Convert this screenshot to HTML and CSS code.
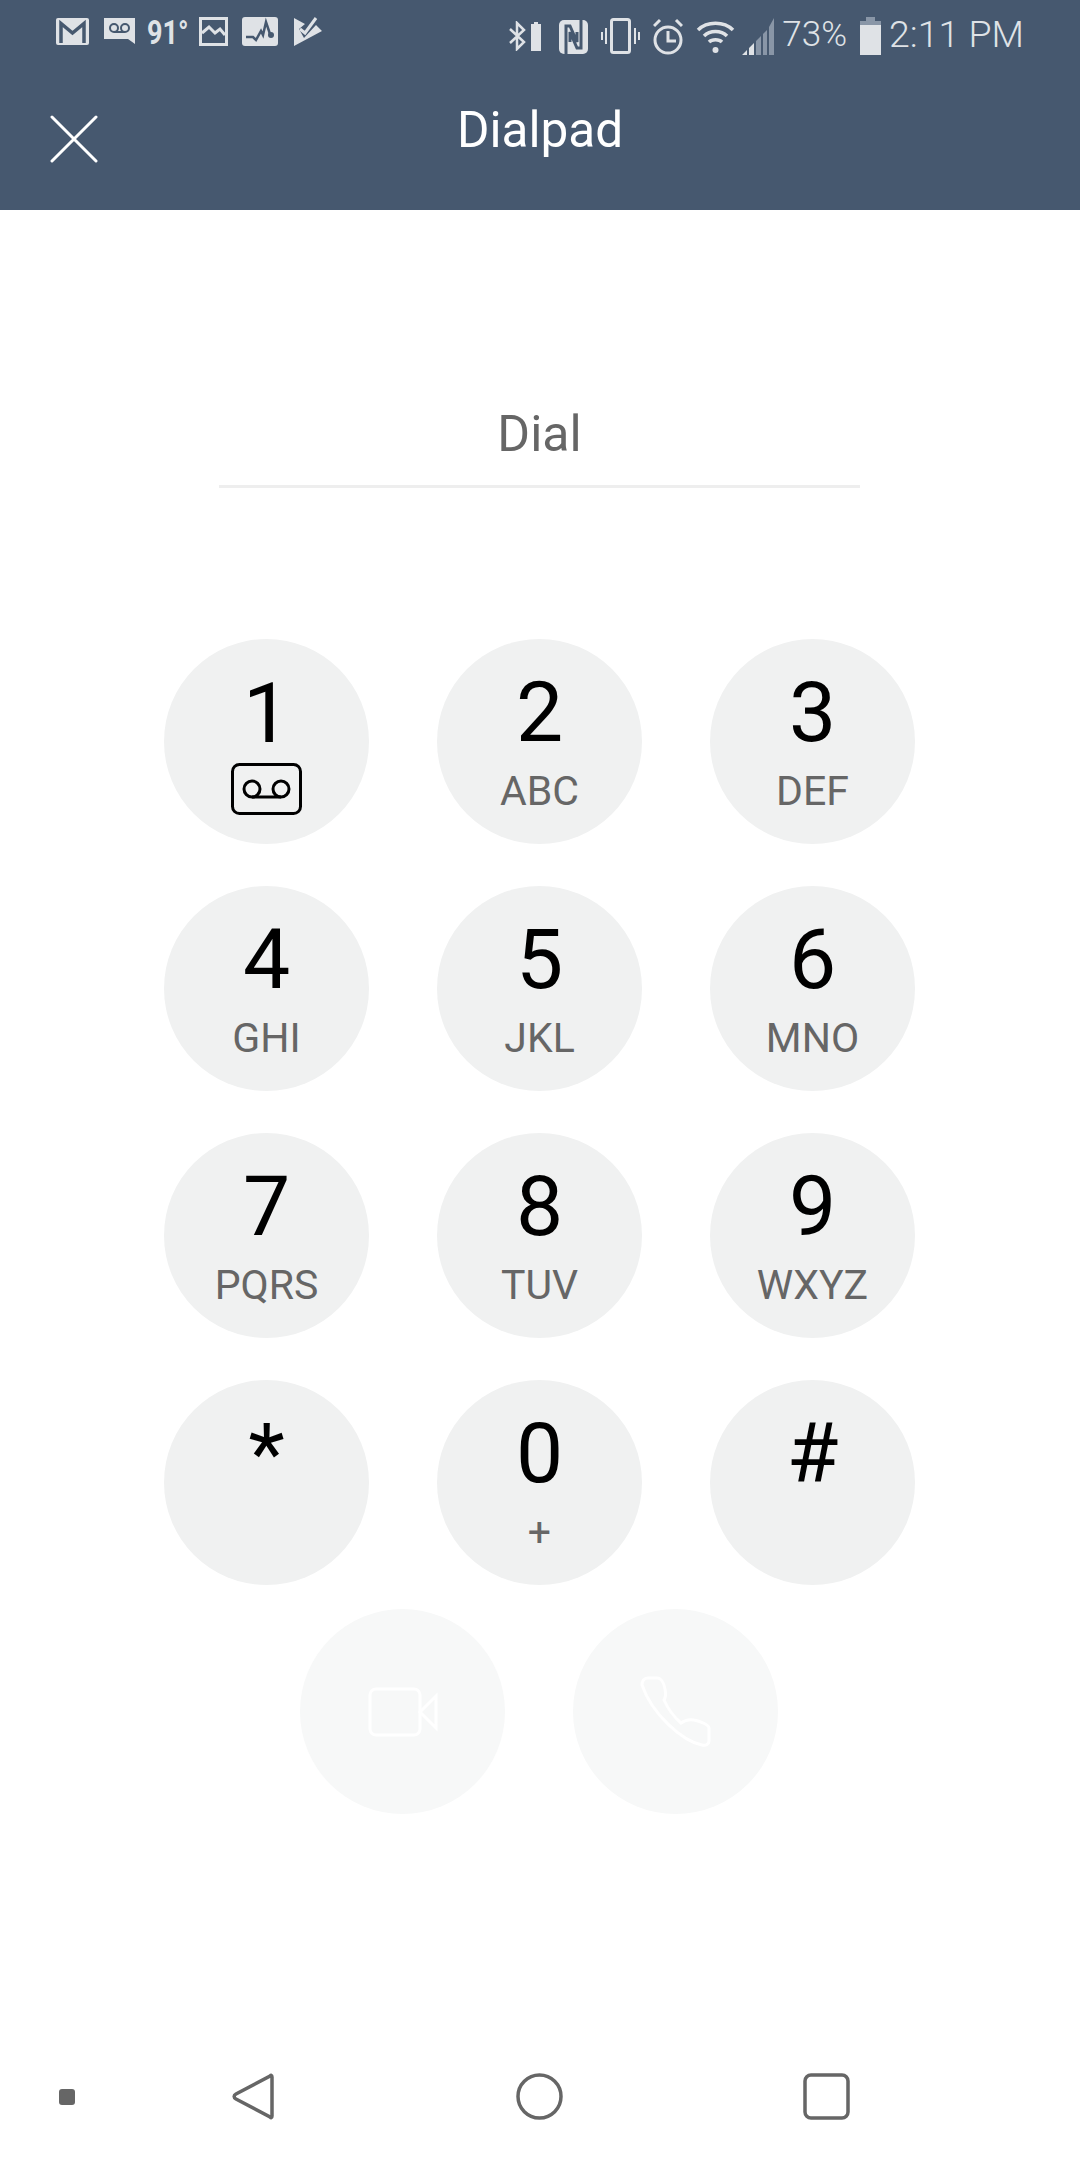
FILE: index.html
```html
<!DOCTYPE html>
<html lang="en">
<head>
<meta charset="utf-8">
<title>Dialpad</title>
<link rel="stylesheet" href="styles.css">
</head>
<body>
<div class="screen">
  <header class="header">
    <div class="status">
      <div class="status-left">
        <svg class="s-mail" width="33" height="27" viewBox="0 0 33 27"><rect width="33" height="27" rx="2" fill="#dfe2e6"/><path d="M5 25V5.500L16.500 15 28 5.500V25" fill="none" stroke="#46586f" stroke-width="3.500"/></svg>
        <svg class="s-vm" width="31" height="26" viewBox="0 0 31 26"><path d="M0 0H31V26L24 21H0Z" fill="#dfe2e6"/><g fill="none" stroke="#46586f" stroke-width="2"><circle cx="10" cy="10" r="4"/><circle cx="21" cy="10" r="4"/><path d="M10 14H21"/></g></svg>
        <span class="s-temp">91°</span>
        <svg class="s-img" width="29" height="29" viewBox="0 0 29 29"><rect x="1.500" y="1.500" width="26" height="26" fill="none" stroke="#dfe2e6" stroke-width="3"/><path d="M3 16L10 10 16 16 21 12 26 18" fill="none" stroke="#dfe2e6" stroke-width="3"/></svg>
        <svg class="s-act" width="36" height="29" viewBox="0 0 36 29"><rect width="36" height="29" rx="3" fill="#dfe2e6"/><path d="M4 20H11L14 23 19 14 21 18 24 5 28 17" fill="none" stroke="#46586f" stroke-width="2.500"/><circle cx="29" cy="18" r="3" fill="#46586f"/></svg>
        <svg class="s-chk" width="28" height="29" viewBox="0 0 28 29"><path d="M0 1L11 7 5 12 10 21 22 8 28 14 0 29Z" fill="#dfe2e6"/><path d="M6 12L11 16 22 1" fill="none" stroke="#dfe2e6" stroke-width="3"/></svg>
      </div>
      <div class="status-right">
        <svg class="s-bt" width="19" height="30" viewBox="0 0 19 30"><path d="M2 8L16 21 9 28V2L16 9 2 22" fill="none" stroke="#dfe2e6" stroke-width="2.500"/></svg>
        <svg class="s-minibat" width="10" height="29" viewBox="0 0 10 29"><path d="M3 0H7V2H10V29H0V2H3Z" fill="#dfe2e6"/></svg>
        <svg class="s-nfc" width="29" height="34" viewBox="0 0 29 34"><rect width="29" height="34" rx="5" fill="#dfe2e6"/><path d="M7 34V6H11L18 22V12M22 0V28H18L11 12V22" fill="none" stroke="#46586f" stroke-width="3"/></svg>
        <svg class="s-vib" width="39" height="36" viewBox="0 0 39 36"><rect x="10.500" y="1.500" width="18" height="33" rx="2" fill="none" stroke="#dfe2e6" stroke-width="3"/><path d="M5 10V26M1 14V22M34 10V26M38 14V22" stroke="#dfe2e6" stroke-width="2"/></svg>
        <svg class="s-alarm" width="30" height="37" viewBox="0 0 30 37"><circle cx="15" cy="22" r="13" fill="none" stroke="#dfe2e6" stroke-width="3"/><path d="M15 13V23H23M1 8L7 2M29 8L23 2" fill="none" stroke="#dfe2e6" stroke-width="3"/></svg>
        <svg class="s-wifi" width="39" height="36" viewBox="0 0 39 36"><path d="M2 12C11 3 28 3 37 12M8 18C14 12 25 12 31 18M13 24C16 21 23 21 26 24" fill="none" stroke="#dfe2e6" stroke-width="3.500"/><circle cx="19.500" cy="32" r="3" fill="#dfe2e6"/></svg>
        <svg class="s-sig" width="32" height="37" viewBox="0 0 32 37"><path d="M0 37L5 32V37ZM7 37V30L12 25V37Z" fill="#dfe2e6"/><path d="M14 37V23L19 18V37ZM21 37V16L25 12V37ZM27 37V9L32 0V37Z" fill="#8996a7"/></svg>
        <span class="s-pct">73%</span>
        <svg class="s-bat" width="21" height="38" viewBox="0 0 21 38"><path d="M6 0H15V4H21V38H0V4H6Z" fill="#dfe2e6"/><path d="M6 0H15V4H21V8H0V4H6Z" fill="#8996a7"/></svg>
        <span class="s-time">2:11 PM</span>
      </div>
    </div>
    <div class="appbar">
      <svg class="close" width="48" height="48" viewBox="0 0 48 48"><path d="M2 2L46 46M46 2L2 46" stroke="#fff" stroke-width="3" stroke-linecap="round"/></svg>
      <h1 class="title">Dialpad</h1>
    </div>
  </header>

  <main class="main">
    <div class="dial-field">Dial</div>
    <div class="keypad">
      <div class="key key-vm"><span class="digit">1</span>
        <svg class="vm" width="71" height="52" viewBox="0 0 71 52"><rect x="1.500" y="1.500" width="68" height="49" rx="7" fill="none" stroke="#000" stroke-width="3"/><g fill="none" stroke="#000" stroke-width="3"><circle cx="21" cy="26" r="8"/><circle cx="50" cy="26" r="8"/><path d="M21 34H50"/></g></svg>
      </div>
      <div class="key"><span class="digit">2</span><span class="letters">ABC</span></div>
      <div class="key"><span class="digit">3</span><span class="letters">DEF</span></div>
      <div class="key"><span class="digit">4</span><span class="letters">GHI</span></div>
      <div class="key"><span class="digit">5</span><span class="letters">JKL</span></div>
      <div class="key"><span class="digit">6</span><span class="letters">MNO</span></div>
      <div class="key"><span class="digit">7</span><span class="letters">PQRS</span></div>
      <div class="key"><span class="digit">8</span><span class="letters">TUV</span></div>
      <div class="key"><span class="digit">9</span><span class="letters">WXYZ</span></div>
      <div class="key"><span class="digit">*</span></div>
      <div class="key"><span class="digit">0</span><span class="letters">+</span></div>
      <div class="key"><span class="digit">#</span></div>
    </div>
    <div class="calls">
      <div class="call">
        <svg width="70" height="50" viewBox="0 0 70 50"><rect x="2" y="2" width="50" height="46" rx="6" fill="none" stroke="#fff" stroke-width="3"/><path d="M52 25L68 9V41Z" fill="none" stroke="#fff" stroke-width="3"/></svg>
      </div>
      <div class="call">
        <svg width="72" height="72" viewBox="0 0 72 72"><path d="M2 9C2 5 4 2 8 2H17C21 2 24 7 25 13C26 18 26 21 24 24C28 33 33 40 41 47C45 44 49 43 54 44C60 45 69 49 69 52V65C69 68 66 70 62 69C42 65 12 38 2 9Z" fill="none" stroke="#fff" stroke-width="3"/></svg>
      </div>
    </div>
  </main>

  <nav class="nav">
    <svg class="n-dot" width="16" height="16" viewBox="0 0 16 16"><rect width="16" height="16" rx="3" fill="#666"/></svg>
    <svg class="n-back" width="42" height="47" viewBox="0 0 42 47"><path d="M38 3C39 2 40 2 40 4V43C40 45 39 45 38 44L4 26C1.500 24.500 1.500 22.500 4 21Z" fill="none" stroke="#666" stroke-width="3.500"/></svg>
    <svg class="n-home" width="47" height="47" viewBox="0 0 47 47"><circle cx="23.500" cy="23.500" r="21.500" fill="none" stroke="#666" stroke-width="3.500"/></svg>
    <svg class="n-recent" width="47" height="47" viewBox="0 0 47 47"><rect x="2" y="2" width="43" height="43" rx="6" fill="none" stroke="#666" stroke-width="3.500"/></svg>
  </nav>
</div>
</body>
</html>
```

FILE: styles.css
```css
* { box-sizing: border-box; }
html, body { margin: 0; padding: 0; background: #fff; }
body { font-family: Roboto, "Liberation Sans", sans-serif; }
.screen { width: 1080px; height: 2160px; display: flex; flex-direction: column; overflow: hidden; }

.header { height: 210px; background: #46586f; color: #fff; }
.status { height: 72px; padding: 17px 56px 0; display: flex; justify-content: space-between; align-items: flex-start; color: #dfe2e6; }
.status svg { display: block; flex: none; }
.status-left, .status-right { display: flex; align-items: flex-start; }
.s-mail { margin-top: 1px; }
.s-vm { margin-left: 15px; margin-top: 1px; }
.s-temp { margin-left: 12px; font-size: 33px; font-weight: 700; line-height: 32px; width: 40px; white-space: nowrap; transform: scaleX(.82); transform-origin: left top; }
.s-img { margin-left: 12px; }
.s-act { margin-left: 14px; }
.s-chk { margin-left: 16px; }
.s-bt { margin-top: 4px; }
.s-minibat { margin-left: 4px; margin-top: 5px; }
.s-nfc { margin-left: 18px; margin-top: 3px; }
.s-vib { margin-left: 13px; margin-top: 1px; }
.s-alarm { margin-left: 13px; margin-top: 1px; }
.s-wifi { margin-left: 13px; margin-top: 1px; }
.s-sig { margin-left: 7px; margin-top: 1px; }
.s-pct { margin-left: 8px; font-size: 35px; font-weight: 300; line-height: 36px; white-space: nowrap; }
.s-bat { margin-left: 13px; }
.s-time { margin-left: 8px; font-size: 37.500px; font-weight: 300; line-height: 34px; white-space: nowrap; }

.appbar { height: 138px; padding: 0 0 22px 51px; display: grid; grid-template-columns: 1fr auto 1fr; align-items: center; }
.close { display: block; grid-column: 1; margin-top: 18px; margin-left: -1px; }
.title { grid-column: 2; margin: 0 51px 0 0; font-size: 49.500px; font-weight: 400; line-height: 60px; color: #fff; }

.main { flex: 1; display: flex; flex-direction: column; align-items: center; padding-right: 1px; }
.dial-field { width: 641px; height: 278px; margin-bottom: 151px; padding-top: 193px; border-bottom: 3px solid #eeeeee; text-align: center; font-size: 50px; line-height: 62px; color: #666; }

.keypad { display: grid; grid-template-columns: repeat(3, 205px); grid-auto-rows: 205px; column-gap: 68px; row-gap: 42px; }
.key { background: #f0f1f1; border-radius: 50%; display: flex; flex-direction: column; align-items: center; padding-top: 32px; }
.key-vm { padding-top: 33px; }
.digit { font-size: 84px; line-height: 84px; color: #000; }
.letters { margin-top: 14px; font-size: 41px; line-height: 44px; color: #666; }
.vm { display: block; margin-top: 7px; }

.calls { display: flex; gap: 68px; margin-top: 24px; margin-right: 1px; }
.call { width: 205px; height: 205px; border-radius: 50%; background: #f7f8f8; display: flex; align-items: center; justify-content: center; }
.call svg { display: block; }

.nav { height: 87px; padding: 0 0 0 59px; display: flex; align-items: flex-start; flex: none; }
.nav svg { display: block; flex: none; }
.n-dot { margin-top: 16px; }
.n-back { margin-left: 157px; }
.n-home { margin-left: 242px; }
.n-recent { margin-left: 240px; }
```
